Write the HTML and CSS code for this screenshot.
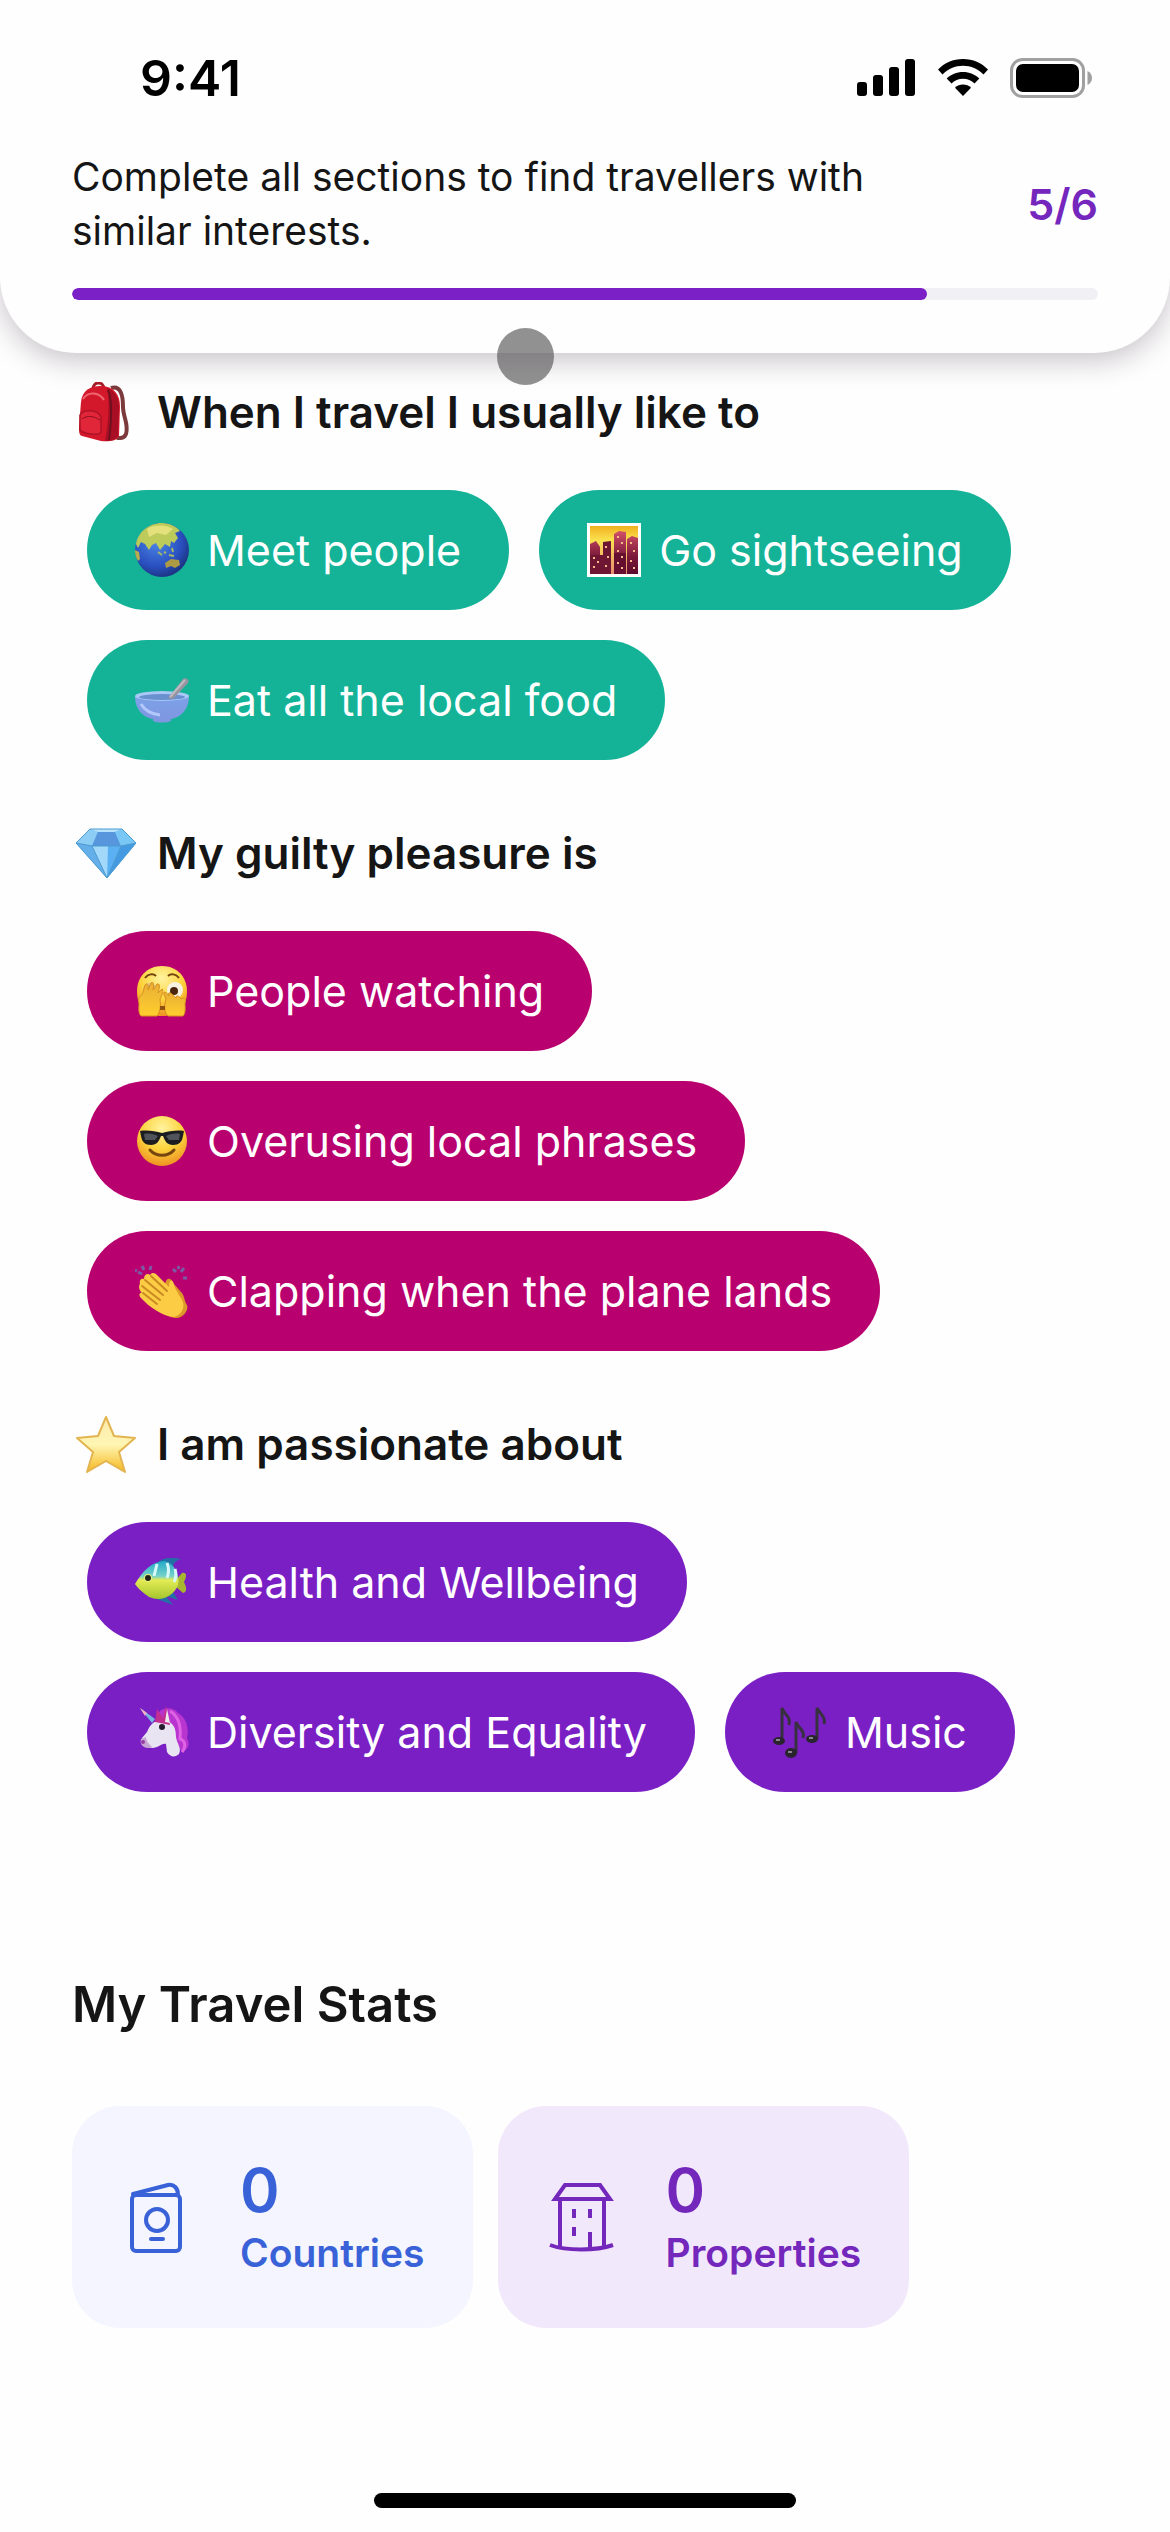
FILE: index.html
```html
<!DOCTYPE html>
<html lang="en">

<head>
    <meta charset="UTF-8" />
    <meta name="viewport" content="width=device-width, initial-scale=1.0" />
    <title>My interests</title>
    <link rel="stylesheet" href="styles.css">
</head>

<body>
    <header class="header">
        <div class="status-bar">
            <span class="time">9:41</span>
            <div class="status-icons">
                <svg width="60" height="40" viewBox="0 0 60 40">
                    <rect x="1" y="24" width="10" height="14" rx="3" />
                    <rect x="17" y="17" width="10" height="21" rx="3" />
                    <rect x="33" y="9" width="10" height="29" rx="3" />
                    <rect x="49" y="1" width="10" height="37" rx="3" />
                </svg>
                <svg width="50" height="40" viewBox="0 0 50 40">
                    <path d="M25 1C35 1 43.500 5 50 11.500L45.500 16.500C40 11 33 7.800 25 7.800S10 11 4.500 16.500L0 11.500C6.500 5 15 1 25 1z" />
                    <path d="M25 14C31.500 14 37 16.500 41.300 20.500L36.500 25.500C33.500 22.500 29.500 20.700 25 20.700S16.500 22.500 13.500 25.500L8.700 20.500C13 16.500 18.500 14 25 14z" />
                    <path d="M25 26.500C28 26.500 31 27.700 33 29.700L25 38L17 29.700C19 27.700 22 26.500 25 26.500z" />
                </svg>
                <svg width="82" height="40" viewBox="0 0 82 40">
                    <rect x="1.500" y="1.500" width="72" height="37" rx="11" fill="none" stroke="#a0a0a0" stroke-width="3" />
                    <rect x="6" y="6" width="63" height="28" rx="7" />
                    <path d="M77.500 13C80.500 14.500 82 17 82 20S80.500 25.500 77.500 27z" fill="#a0a0a0" />
                </svg>
            </div>
        </div>
        <div class="header-row">
            <label class="header-text" for="sections">Complete all sections to find travellers with similar interests.</label>
            <span class="step">5/6</span>
        </div>
        <progress id="sections" class="bar" value="5" max="6"></progress>
        <span class="touch"></span>
    </header>

    <main>
        <section class="group">
            <h2 class="group-title">
                <svg class="emoji" viewBox="3 0 60 60">
                    <path d="M38 6C48 3 50 14 50 25C50 35 56 42 53 52C51 57 44 57 43 54" fill="none" stroke="#7d3a3c" stroke-width="4" />
                    <path d="M20 7C20-1 31-1 31 7" fill="none" stroke="#a81c29" stroke-width="3" />
                    <path d="M8 20C9 8 18 4 27 4C41 4 47 12 47 25L46 54C44 59 35 60 28 59L9 54C6 53 6 50 6 45z" fill="#d4182c" />
                    <path d="M34 6C43 9 46 17 46 26L45 54C43 58 37 59 32 59C35 43 37 23 34 6z" fill="#a90f24" />
                    <path d="M35 8C40 19 38 42 36 58" fill="none" stroke="#6f101f" stroke-width="2" />
                    <path d="M7 33C10 27 25 27 28 35V50C27 54 10 52 7 48z" fill="#e2263a" stroke="#ae1326" stroke-width="1.500" />
                    <path d="M10 17C15 9 26 10 31 18" fill="none" stroke="#ef6670" stroke-width="2" />
                    <path d="M9 37C14 33 21 34 27 38" fill="none" stroke="#8f1020" stroke-width="1" />
                </svg>
                When I travel I usually like to
            </h2>
            <ul class="chips green">
                <li class="chip">
                    <svg class="chip-emoji" viewBox="0 0 54 54">
                        <defs>
                            <radialGradient id="sea" cx=".4" cy=".35" r=".65">
                                <stop offset="0" stop-color="#4b86e6" />
                                <stop offset=".7" stop-color="#2a50c0" />
                                <stop offset="1" stop-color="#1d3687" />
                            </radialGradient>
                        </defs>
                        <circle cx="27" cy="27" r="27" fill="url(#sea)" />
                        <path d="M1 21C3 9 14 0 27 0C35 0 42 4 45 8L40 10L43 15L39 20L36 18L35 24L30 21L25 27L21 20L17 22L14 27L10 21L6 19L3 25z" fill="#bccb5a" />
                        <path d="M12 6C20 1 32 2 38 6L31 12L22 10L14 14z" fill="#e4e07c" />
                        <path d="M0 27L4 29L5 36L3 38C1 35 0 31 0 27z" fill="#b7ad4b" />
                        <path d="M30 40L36 36L44 37L45 42L40 45L36 43L31 45z" fill="#ad9a45" />
                        <path d="M23 29L27 32M29 29L31 30M34 32L39 33M37 25L38 29" stroke="#a5b865" stroke-width="2" />
                    </svg>
                    Meet people
                </li>
                <li class="chip">
                    <svg class="chip-emoji" viewBox="0 0 54 54">
                        <defs>
                            <linearGradient id="dusk" x2="0" y2="1">
                                <stop offset="0" stop-color="#f0b01e" />
                                <stop offset=".3" stop-color="#fbe250" />
                                <stop offset="1" stop-color="#e88a72" />
                            </linearGradient>
                            <linearGradient id="tower" x2="0" y2="1">
                                <stop offset="0" stop-color="#d2506a" />
                                <stop offset=".6" stop-color="#7a1838" />
                                <stop offset="1" stop-color="#5c0b2e" />
                            </linearGradient>
                        </defs>
                        <rect width="54" height="54" fill="#fff" />
                        <rect x="3" y="3" width="48" height="48" fill="url(#dusk)" />
                        <path d="M3 21L9 18L13 24V51H3zM27 11L32 8L39 9V51H27zM40 16L45 13L51 15V51H40z" fill="url(#tower)" />
                        <path d="M16 19L24 18V51H16zM3 32H16V51H3z" fill="#6d1533" />
                        <path d="M27 30H39V51H27z" fill="#650e30" />
                        <path d="M6 35h2M10 39h2M6 44h2M18 24h2M20 34h2M18 43h2M30 14h2M34 20h2M30 28h2M34 34h2M30 40h2M34 45h2M43 20h2M46 28h2M43 38h2M46 45h2" stroke="#f7bb8c" stroke-width="2" />
                    </svg>
                    Go sightseeing
                </li>
                <li class="chip">
                    <svg class="chip-emoji" viewBox="0 0 54 54">
                        <defs>
                            <linearGradient id="bowl" x2="0" y2="1">
                                <stop offset="0" stop-color="#7da2e8" />
                                <stop offset="1" stop-color="#7f95e0" />
                            </linearGradient>
                        </defs>
                        <path d="M0 23C0 38 10 45 18 46V48C23 50 31 50 36 48V46C44 45 54 38 54 23z" fill="url(#bowl)" />
                        <ellipse cx="27" cy="23" rx="27" ry="5" fill="#a9c8f6" />
                        <ellipse cx="27" cy="24" rx="23" ry="3" fill="#6990cf" />
                        <path d="M33 25L48 6C50 4 55 6 53 10L38 26z" fill="#97959f" />
                        <path d="M35 24L50 7" stroke="#bcbac2" stroke-width="2" />
                        <path d="M6 31C10 38 16 41 25 42" fill="none" stroke="#b2c8fb" stroke-width="3" />
                    </svg>
                    Eat all the local food
                </li>
            </ul>
        </section>

        <section class="group">
            <h2 class="group-title">
                <svg class="emoji" viewBox="0 0 60 60">
                    <path d="M14 6H46L60 20L31 55L0 20z" fill="#60b4ec" />
                    <path d="M14 6L0 20L16 23L22 9z" fill="#8ccdf6" />
                    <path d="M14 6L22 9H39L46 6z" fill="#b6e2fb" />
                    <path d="M22 9H39L45 23H16z" fill="#5796dd" />
                    <path d="M39 9L46 6L60 20L45 23z" fill="#79c7f4" />
                    <path d="M0 20L16 23L31 55z" fill="#64aeea" />
                    <path d="M16 23H45L31 55z" fill="#a2d8fa" />
                    <path d="M32 23H45L31 55z" fill="#5ab0f3" />
                    <path d="M45 23L60 20L31 55z" fill="#459be2" />
                    <path d="M14 6H46L60 20L31 55L0 20zM0 20L16 23H45L60 20M16 23L31 55L45 23" fill="none" stroke="#4c9bd0" stroke-width="1" />
                </svg>
                My guilty pleasure is
            </h2>
            <ul class="chips pink">
                <li class="chip">
                    <svg class="chip-emoji" viewBox="0 0 54 54">
                        <defs>
                            <radialGradient id="face" cx=".5" cy=".25" r=".75">
                                <stop offset="0" stop-color="#fff3a0" />
                                <stop offset=".55" stop-color="#fdd43d" />
                                <stop offset="1" stop-color="#ee9122" />
                            </radialGradient>
                            <linearGradient id="skin" x2="0" y2="1">
                                <stop offset="0" stop-color="#e9ae35" />
                                <stop offset="1" stop-color="#ffcf2e" />
                            </linearGradient>
                        </defs>
                        <path d="M27 2C42 2 52 13 52 27C52 43 44 52 27 52S2 43 2 27C2 13 12 2 27 2z" fill="url(#face)" />
                        <path d="M10 14C13 10 18 9 21 12M33 12C36 9 41 10 44 14" fill="none" stroke="#70430b" stroke-width="2" />
                        <circle cx="15" cy="26" r="7" fill="#dbc690" />
                        <circle cx="40" cy="26" r="8" fill="#f8f2e0" />
                        <circle cx="39" cy="27" r="4" fill="#4b260d" />
                        <path d="M4 39C2 32 7 33 8 28L10 21C12 18 14 21 13 26L16 19C19 17 19 21 18 26L22 20C25 19 25 23 23 29L27 25C29 25 27 32 25 35C26 42 25 48 22 52H6C3 49 4 43 4 39z" fill="url(#skin)" stroke="#d88f20" stroke-width="1" />
                        <path d="M50 39C52 33 48 34 46 35C43 31 41 31 41 34C35 27 32 28 34 32C29 25 27 28 31 35C29 42 29 48 33 52H48C51 49 50 43 50 39z" fill="url(#skin)" stroke="#d88f20" stroke-width="1" />
                        <path d="M25 42H30V46H25z" fill="#91500e" />
                    </svg>
                    People watching
                </li>
                <li class="chip">
                    <svg class="chip-emoji" viewBox="0 0 54 54">
                        <circle cx="27" cy="27" r="25" fill="url(#face)" />
                        <path d="M5 17C12 16 20 17 27 19C34 17 42 16 49 17L48 22C47 28 44 31 38 31C32 31 30 27 28 22H26C24 27 22 31 16 31C10 31 7 28 6 22z" fill="#1c1d20" />
                        <path d="M9 20C14 19 19 20 23 22L20 26H10zM31 22C35 20 40 19 45 20L44 26H34z" fill="#50535a" />
                        <path d="M15 36C21 43 33 43 39 36" fill="none" stroke="#76460e" stroke-width="3" stroke-linecap="round" />
                    </svg>
                    Overusing local phrases
                </li>
                <li class="chip">
                    <svg class="chip-emoji" viewBox="0 0 54 54">
                        <path d="M3 8L7 10M7 2L9 6M16 2L15 6M0 6L2 7M38 5L41 8M49 4L46 8M52 14L48 14M44 2L43 5" stroke="#7b5aa6" stroke-width="3" />
                        <path d="M31 17C33 13 37 15 39 20L46 28C50 32 49 37 52 41C54 47 47 55 40 54C31 53 25 46 22 41z" fill="#dd982a" />
                        <path d="M5 20C4 15 7 14 9 15C9 10 13 9 15 11C17 8 20 9 22 11L34 23C34 17 36 15 38 18C40 25 43 29 46 34C52 43 46 52 38 53C28 52 14 43 6 34C3 31 5 28 7 29C3 25 4 21 5 20z" fill="#fccd44" />
                        <path d="M10 16L28 31M16 12L32 27M7 22L25 36M8 29L22 40" stroke="#c98922" stroke-width="2" stroke-linecap="round" />
                    </svg>
                    Clapping when the plane lands
                </li>
            </ul>
        </section>

        <section class="group">
            <h2 class="group-title">
                <svg class="emoji" viewBox="0 0 60 60">
                    <defs>
                        <linearGradient id="star" x2="0" y2="1">
                            <stop offset="0" stop-color="#fbe9ab" />
                            <stop offset=".5" stop-color="#fff6b4" />
                            <stop offset="1" stop-color="#f6b81f" />
                        </linearGradient>
                    </defs>
                    <path d="M30 3L38 22L59 24L43 38L49 58L30 47L11 58L17 38L1 24L22 22z" fill="url(#star)" stroke="#e3b450" stroke-width="2" stroke-linejoin="round" />
                </svg>
                I am passionate about
            </h2>
            <ul class="chips purple">
                <li class="chip">
                    <svg class="chip-emoji" viewBox="0 0 54 54">
                        <defs>
                            <linearGradient id="fish" x2="0" y2="1">
                                <stop offset="0" stop-color="#22a9c8" />
                                <stop offset=".4" stop-color="#76d1c9" />
                                <stop offset=".5" stop-color="#e4ec55" />
                                <stop offset="1" stop-color="#a5c52d" />
                            </linearGradient>
                        </defs>
                        <path d="M22 8C27 3 34 2 46 4C40 6 39 8 38 12zM19 43L38 50L31 41L43 45L38 37z" fill="#226fa5" />
                        <path d="M40 26L47 18C52 17 52 22 49 27C52 33 52 37 48 38L40 31z" fill="#a8b52f" />
                        <path d="M0 29C8 15 18 6 30 6C40 9 45 20 43 30C38 42 26 47 14 42C9 38 4 35 0 29z" fill="url(#fish)" />
                        <path d="M22 9L19 21M32 8C34 13 34 18 32 23M40 14C42 20 41 23 39 27" stroke="#d6f8f7" stroke-width="3" fill="none" />
                        <circle cx="13" cy="23" r="4" fill="#e7ef84" />
                        <circle cx="13" cy="23" r="3" fill="#202418" />
                    </svg>
                    Health and Wellbeing
                </li>
                <li class="chip">
                    <svg class="chip-emoji" viewBox="0 0 54 54">
                        <path d="M22 10C25 3 37 0 43 8C52 13 54 24 52 33C55 39 54 44 47 47C42 39 39 31 31 18z" fill="#b935cf" />
                        <path d="M35 6C45 12 46 24 45 34C51 36 51 42 47 47" fill="none" stroke="#df63e5" stroke-width="3" />
                        <path d="M12 27C15 19 20 15 27 15C39 16 41 24 41 32C42 39 47 43 44 49C40 53 35 52 32 47L31 39C27 38 25 42 18 43C10 43 5 38 7 33z" fill="#e9e4f1" />
                        <path d="M6 34C4 40 10 45 17 42C14 39 11 36 11 32z" fill="#c7a6d6" />
                        <path d="M20 17L22 4L28 13L31 1L35 20z" fill="#c32f91" />
                        <path d="M30 17L32 4L35 18z" fill="#eee" />
                        <path d="M5 3L20 14L17 18z" fill="#77b8e0" />
                        <path d="M5 3L12 8L10 11z" fill="#edb5c3" />
                        <circle cx="27" cy="22" r="3" fill="#251b2c" />
                        <circle cx="8" cy="37" r="2" fill="#933da1" />
                    </svg>
                    Diversity and Equality
                </li>
                <li class="chip">
                    <svg class="chip-emoji" viewBox="0 0 54 54">
                        <g fill="none" stroke="#37303f" stroke-width="3">
                            <path d="M9 36V3C12 11 18 11 16 20" />
                            <path d="M23 48V17C26 24 32 25 30 33" />
                            <path d="M44 34V3C47 9 53 12 51 19" />
                        </g>
                        <g fill="#29242e">
                            <ellipse cx="6" cy="36" rx="6" ry="4" />
                            <ellipse cx="18" cy="48" rx="6" ry="5" />
                            <ellipse cx="39" cy="34" rx="6" ry="4" />
                        </g>
                        <path d="M3 35H7M15 47H19M36 33H40" stroke="#8a8491" stroke-width="2" />
                    </svg>
                    Music
                </li>
            </ul>
        </section>

        <section class="stats">
            <h1 class="stats-title">My Travel Stats</h1>
            <div class="cards">
                <div class="card blue-card">
                    <svg class="card-icon" viewBox="0 0 72 72">
                        <rect x="12" y="14" width="48" height="56" rx="4" />
                        <path d="M13 13L48 4C54 3 58 7 58 14" />
                        <circle cx="37" cy="39" r="11" />
                        <path d="M31 58H43" />
                    </svg>
                    <div>
                        <p class="number">0</p>
                        <p class="label">Countries</p>
                    </div>
                </div>
                <div class="card purple-card">
                    <svg class="card-icon square" viewBox="0 0 72 72">
                        <path d="M9 18L19 4H54L64 18z" />
                        <path d="M14 18V66M58 18V66M4 64C20 70 50 70 67 64" />
                        <path d="M28 28V37M44 28V37M28 46V55M44 51V67" />
                    </svg>
                    <div>
                        <p class="number">0</p>
                        <p class="label">Properties</p>
                    </div>
                </div>
            </div>
        </section>
    </main>

    <footer class="footer">
        <div class="home-bar"></div>
    </footer>
</body>

</html>
```
FILE: styles.css
```css
* {
    margin: 0px;
    padding: 0px;
    box-sizing: border-box;
}

body {
    min-height: 100vh;
    display: flex;
    flex-direction: column;
    background-color: #fefefe;
    color: #151515;
    font-family: Inter, "Liberation Sans", sans-serif;
}

.header {
    position: relative;
    padding: 48px 72px 53px;
    background-color: #fefefe;
    border-radius: 0 0 76px 76px;
    box-shadow: 0 8px 28px rgba(50, 30, 50, 0.26);
}

.status-bar {
    display: flex;
    justify-content: space-between;
    align-items: center;
    height: 60px;
    margin-bottom: 42px;
    padding: 0 6px 0 68px;
    color: #000;
}

.time {
    font-size: 50px;
    font-weight: 600;
}

.status-icons {
    display: flex;
    gap: 22px;
}

.header-row {
    display: flex;
    justify-content: space-between;
    align-items: center;
    margin-bottom: 30px;
}

.header-text {
    max-width: 840px;
    font-size: 39px;
    line-height: 54px;
}

.step {
    font-size: 43px;
    font-weight: 600;
    color: #7426bd;
}

.bar {
    display: block;
    width: 100%;
    height: 12px;
    border: none;
    border-radius: 6px;
    overflow: hidden;
    appearance: none;
    background-color: #f1f0f5;
}

.bar::-webkit-progress-bar {
    background-color: #f1f0f5;
}

.bar::-webkit-progress-value {
    background-color: #7b1fc6;
    border-radius: 6px;
}

/* touch point, sits over the bottom edge of the header */
.touch {
    position: absolute;
    left: 497px;
    bottom: -32px;
    width: 57px;
    height: 57px;
    border-radius: 50%;
    background-color: rgba(85, 83, 85, 0.64);
}

main {
    flex: 1;
    padding: 29px 72px 0;
}

.group {
    margin-bottom: 63px;
}

.group-title {
    display: flex;
    align-items: center;
    gap: 21px;
    margin-bottom: 48px;
    padding-left: 4px;
    font-size: 44px;
    font-weight: 600;
    line-height: 60px;
}

.emoji {
    width: 60px;
    height: 60px;
}

.chips {
    display: flex;
    flex-wrap: wrap;
    gap: 30px;
    padding: 0 15px;
    list-style: none;
}

.chip {
    display: flex;
    align-items: center;
    gap: 18px;
    height: 120px;
    padding: 0 48px;
    border-radius: 60px;
    font-size: 43px;
    color: #fff;
}

.chip-emoji {
    width: 54px;
    height: 54px;
}

.green .chip {
    background-color: #14b398;
}

.pink .chip {
    background-color: #b9006f;
}

.purple .chip {
    background-color: #7a1fc4;
}

.stats {
    padding-top: 120px;
}

.stats-title {
    margin-bottom: 71px;
    font-size: 49px;
    font-weight: 600;
    line-height: 60px;
}

.cards {
    display: flex;
    gap: 25px;
}

.card {
    display: flex;
    align-items: center;
    gap: 48px;
    padding: 48px;
    border-radius: 48px;
}

.blue-card {
    background-color: #f4f5fe;
    color: #3a62d8;
}

.purple-card {
    background-color: #f2e8fb;
    color: #7427bb;
}

.card-icon {
    width: 72px;
    height: 72px;
    fill: none;
    stroke: currentColor;
    stroke-width: 4;
    stroke-linecap: round;
    stroke-linejoin: round;
}

.square {
    stroke-linecap: butt;
    stroke-linejoin: miter;
}

.number {
    font-size: 60px;
    font-weight: 600;
    line-height: 72px;
}

.label {
    font-size: 39px;
    font-weight: 600;
    line-height: 54px;
}

.footer {
    display: flex;
    justify-content: center;
    padding-bottom: 24px;
}

.home-bar {
    width: 36%;
    height: 15px;
    border-radius: 8px;
    background-color: #000;
}
```
